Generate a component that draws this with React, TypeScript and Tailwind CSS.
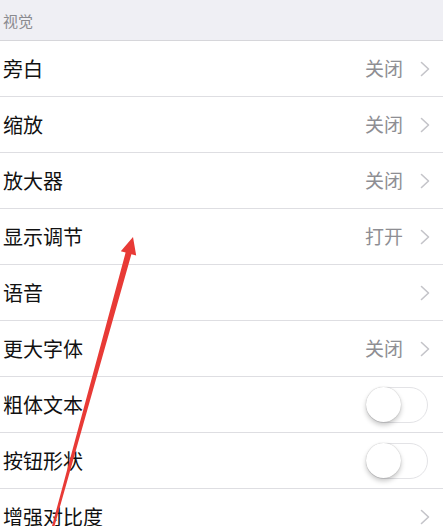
type Row = {
  label: string;
  value?: string;
  kind: "link" | "toggle";
};

const rows: Row[] = [
  { label: "旁白", value: "关闭", kind: "link" },
  { label: "缩放", value: "关闭", kind: "link" },
  { label: "放大器", value: "关闭", kind: "link" },
  { label: "显示调节", value: "打开", kind: "link" },
  { label: "语音", kind: "link" },
  { label: "更大字体", value: "关闭", kind: "link" },
  { label: "粗体文本", kind: "toggle" },
  { label: "按钮形状", kind: "toggle" },
  { label: "增强对比度", kind: "link" },
];

function Chevron() {
  return (
    <svg width="10" height="16" viewBox="0 0 10 16" fill="none">
      <polyline
        points="1.5,1.5 8.5,8 1.5,14.5"
        stroke="#c4c4c9"
        strokeWidth="1.6"
        strokeLinecap="round"
        strokeLinejoin="round"
      />
    </svg>
  );
}

function Toggle() {
  return (
    <div className="relative h-[36px] w-[62px] rounded-full border-[1.5px] border-[#e3e3e6] bg-white">
      <div className="absolute left-[-1px] top-[-1px] h-[35px] w-[35px] rounded-full bg-white shadow-[0_3px_5px_rgba(0,0,0,0.22),0_0_1px_rgba(0,0,0,0.3)]" />
    </div>
  );
}

export default function App() {
  return (
    <div
      className="relative h-[526px] w-[443px] overflow-hidden bg-white"
      style={{ fontFamily: '"Noto Sans CJK SC", "Noto Sans", sans-serif' }}
    >
      <div className="flex h-[41px] items-center border-b border-[#d6d6da] bg-[#efeff4] pl-[3px] pt-[2px] text-[15px] text-[#8a8a8f]">
        视觉
      </div>

      {rows.map((row) => (
        <div
          key={row.label}
          className="flex h-[56px] items-center justify-between border-b border-[#dedee2] pl-[3px] pr-[13px]"
        >
          <span className="text-[20px] text-[#111]">{row.label}</span>
          {row.kind === "toggle" ? (
            <div className="mr-[2px]">
              <Toggle />
            </div>
          ) : (
            <div className="flex items-center gap-[17px]">
              {row.value && (
                <span className="text-[19px] text-[#8e8e93]">{row.value}</span>
              )}
              <Chevron />
            </div>
          )}
        </div>
      ))}

      {/* red annotation arrow */}
      <svg
        className="pointer-events-none absolute left-0 top-0"
        width="443"
        height="526"
        viewBox="0 0 443 526"
      >
        <polygon
          points="52,526 54.5,526 131.4,254.2 136.2,255.5 133,237 120.8,251.3 125.6,252.6"
          fill="#e83a36"
        />
      </svg>
    </div>
  );
}
